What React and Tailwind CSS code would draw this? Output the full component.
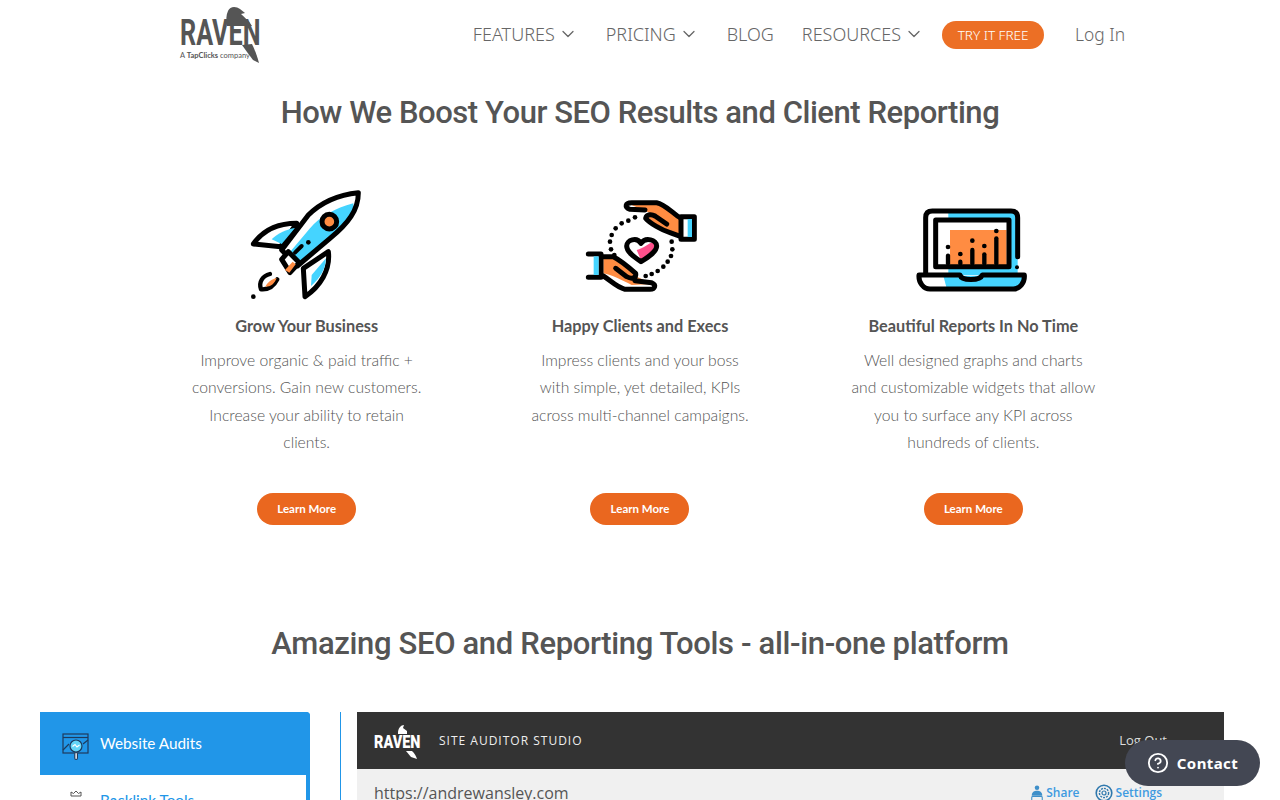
import { ChevronDown, CircleHelp } from 'lucide-react';

const sans = 'font-["Lato","Noto_Sans",sans-serif]';

function RavenLogo() {
  return (
    <div className="relative w-[120px] h-[75px] shrink-0">
      <svg viewBox="0 0 120 75" className="absolute inset-0 w-[120px] h-[75px]" fill="#555">
        <path d="M68 13 C70 8 76 8 80 11 L85 15 L81 16 C85 20 89 23 92 28 L67 28 C66 22 66 17 68 13 Z" />
        <path d="M82 47 L92 46 C95 52 97 58 99 65 L93 62 L87 54 Z" />
      </svg>
      <div className={`absolute left-[20px] top-[18px] origin-left scale-x-[0.7] text-[36px] leading-[34px] font-bold text-[#555] font-["Roboto",sans-serif]`}>RAVEN</div>
      <div className={`absolute left-[20px] top-[53px] text-[7.5px] leading-[10px] text-[#555] ${sans}`}>
        A <span className="font-bold">TapClicks</span> company
      </div>
    </div>
  );
}

function NavLink({ label, caret }) {
  return (
    <a className="flex items-center gap-[3px] text-[#666]">
      {label}
      {caret && <ChevronDown size={20} strokeWidth={1.5} />}
    </a>
  );
}

function RocketIcon() {
  return (
    <svg viewBox="0 0 390 375" className="w-[130px] h-[125px] mt-[6px] -ml-[3px]" strokeLinejoin="round" strokeLinecap="round">
      <path d="M40 192 C70 150 110 130 170 130 L122 200 Z" fill="#fff" stroke="#000" strokeWidth="15" />
      <path d="M95 178 C115 158 140 148 165 144 L125 192 Z" fill="#45d4ff" />
      <path d="M195 350 L190 265 L265 215 C272 270 240 320 195 350 Z" fill="#fff" stroke="#000" strokeWidth="15" />
      <path d="M215 285 L258 235 C256 270 240 295 213 318 Z" fill="#45d4ff" />
      <path d="M355 38 C290 45 240 70 205 105 L125 210 L172 258 L270 175 C325 130 355 90 355 38 Z" fill="#fff" />
      <path d="M340 70 C345 100 315 140 268 175 L172 252 L145 222 L210 145 C240 110 285 85 340 70 Z" fill="#45d4ff" />
      <path d="M355 38 C290 45 240 70 205 105 L125 210 L172 258 L270 175 C325 130 355 90 355 38 Z" fill="none" stroke="#000" strokeWidth="15" />
      <circle cx="268" cy="125" r="22" fill="#ff8c42" stroke="#000" strokeWidth="15" />
      <path d="M125 238 L145 215 L178 248 L150 278 Z" fill="#fff" stroke="#000" strokeWidth="15" />
      <path d="M135 270 L158 245 L167 253 L148 278 Z" fill="#ff8c42" />
      <path d="M90 282 C68 288 55 305 63 328 C85 330 102 318 112 298" fill="#fff" stroke="#000" strokeWidth="13" />
      <path d="M76 320 C83 305 95 298 110 293 C105 310 92 320 76 320 Z" fill="#ff8c42" />
      <circle cx="40" cy="350" r="7" fill="#000" />
      <circle cx="205" cy="187" r="7" fill="#000" />
      <path d="M165 218 L185 198" stroke="#000" strokeWidth="12" />
    </svg>
  );
}

function HandsIcon() {
  const dots = [[180, 82], [160, 92], [140, 100], [122, 115], [110, 135], [105, 155], [108, 178], [118, 195], [290, 155], [292, 178], [288, 198], [278, 215], [265, 230], [248, 243], [230, 252], [212, 258]];
  return (
    <svg viewBox="0 0 390 330" className="w-[130px] h-[110px] mt-[16px]" strokeLinejoin="round" strokeLinecap="round">
      <path d="M170 45 L245 40 C270 45 295 70 318 85 L318 140 L285 128 C260 115 235 100 215 82 C225 70 245 75 250 80 L205 60 Z" fill="#ff8c42" />
      <path d="M210 60 L165 58 C148 52 150 38 170 38 L245 38 C270 42 295 72 318 85 M318 140 L285 128 C260 120 225 100 212 85 C215 72 230 72 240 78 L275 102" fill="none" stroke="#000" strokeWidth="15" />
      <path d="M318 80 L358 80 L358 148 L318 148 Z" fill="#fff" stroke="#000" strokeWidth="15" />
      <path d="M338 87 L351 87 L351 141 L338 141 Z" fill="#45d4ff" />
      <path d="M85 205 L130 205 C150 215 170 240 180 258 L235 282 L170 285 C140 270 110 255 85 250 Z" fill="#ff8c42" />
      <path d="M180 272 L230 278 C245 285 240 298 225 298 L150 298 C125 292 105 270 85 258 M85 200 L115 200 C135 210 165 235 182 250 C185 265 170 268 155 260 L122 235" fill="none" stroke="#000" strokeWidth="15" />
      <path d="M40 192 L78 192 L78 262 L40 262" fill="#fff" stroke="#000" strokeWidth="15" />
      <path d="M56 199 L71 199 L71 255 L56 255 Z" fill="#45d4ff" />
      <path d="M198 215 C175 200 155 185 155 168 C155 150 185 140 198 160 C212 140 245 150 245 168 C245 185 222 200 198 215 Z" fill="#fff" />
      <path d="M198 210 L185 180 C205 175 220 160 235 155 C245 175 225 195 198 210 Z" fill="#ff4f8b" />
      <path d="M198 215 C175 200 155 185 155 168 C155 150 185 140 198 160 C212 140 245 150 245 168 C245 185 222 200 198 215 Z" fill="none" stroke="#000" strokeWidth="15" />
      {dots.map(([x, y]) => (
        <circle key={`${x}-${y}`} cx={x} cy={y} r="7" fill="#000" />
      ))}
    </svg>
  );
}

function LaptopIcon() {
  const bars = [[129, 182, 205], [166, 200, 205], [202, 165, 205], [238, 178, 205], [274, 130, 205]];
  const tops = [[129, 156], [166, 177], [202, 137], [238, 153], [274, 108]];
  return (
    <svg viewBox="0 0 390 315" className="w-[130px] h-[105px] mt-[21px] -ml-[6px]" strokeLinejoin="round" strokeLinecap="round">
      <path d="M130 48 L320 48 Q338 48 338 68 L338 240 L130 240 Z" fill="#45d4ff" />
      <path d="M115 242 L355 242 L345 280 L125 280 Z" fill="#45d4ff" />
      <path d="M62 238 L62 68 Q62 48 82 48 L318 48 Q338 48 338 68 L338 185" fill="none" stroke="#000" strokeWidth="15" />
      <rect x="92" y="75" width="220" height="140" fill="#fff" />
      <rect x="135" y="105" width="170" height="105" fill="#ff8c42" />
      <rect x="92" y="75" width="220" height="140" fill="none" stroke="#000" strokeWidth="15" />
      {bars.map(([x, y1, y2]) => (
        <path key={x} d={`M${x} ${y1} L${x} ${y2}`} stroke="#000" strokeWidth="13" />
      ))}
      {tops.map(([x, y]) => (
        <circle key={x} cx={x} cy={y} r="7" fill="#000" />
      ))}
      <circle cx="336" cy="217" r="6" fill="#000" />
      <path d="M42 240 L165 240 C170 258 225 258 232 240 L358 240 C360 262 345 282 325 282 L75 282 C55 282 40 262 42 240 Z" fill="none" stroke="#000" strokeWidth="15" />
    </svg>
  );
}

function FeatureCard({ icon, title, lines }) {
  return (
    <div className="flex flex-col items-center">
      <div className="h-[130px] flex items-start justify-center">{icon}</div>
      <h3 className="mt-[10px] text-[16.3px] leading-[24px] font-bold text-[#555]">{title}</h3>
      <div className="mt-[9px] h-[137px] text-[15.7px] leading-[27.3px] font-light text-[#555] text-center">
        {lines.map(l => (
          <p key={l}>{l}</p>
        ))}
      </div>
      <button className="mt-[9px] w-[99px] h-[32px] rounded-full bg-[#ea671f] text-white text-[11.5px] font-bold">Learn More</button>
    </div>
  );
}

const features = [
  {
    icon: <RocketIcon />,
    title: 'Grow Your Business',
    lines: ['Improve organic & paid traffic +', 'conversions. Gain new customers.', 'Increase your ability to retain', 'clients.'],
  },
  {
    icon: <HandsIcon />,
    title: 'Happy Clients and Execs',
    lines: ['Impress clients and your boss', 'with simple, yet detailed, KPIs', 'across multi-channel campaigns.'],
  },
  {
    icon: <LaptopIcon />,
    title: 'Beautiful Reports In No Time',
    lines: ['Well designed graphs and charts', 'and customizable widgets that allow', 'you to surface any KPI across', 'hundreds of clients.'],
  },
];

function AuditIcon() {
  return (
    <svg viewBox="0 0 28 28" className="w-[28px] h-[28px] mt-[7px]" fill="none" stroke="#1e3a5c" strokeWidth="1.2">
      <rect x="1" y="1" width="25" height="19" />
      <path d="M1 4.5 H26" />
      <path d="M1 17 L7 11 M21 11 L26 7" />
      <circle cx="14" cy="13" r="6" fill="#63d5f7" />
      <path d="M10.5 13.5 L13 11.5 L15 14 L17.5 12" stroke="#fff" />
      <rect x="12.8" y="19.5" width="2.6" height="7" rx="1.2" fill="#fff" />
    </svg>
  );
}

function BacklinkIcon() {
  return (
    <svg viewBox="0 0 12 20" className="w-[12px] h-[20px]" fill="#fff" stroke="#555" strokeWidth="1">
      <path d="M1 6 L1 2 L3.5 3.5 L6 1 L8.5 3.5 L11 2 L11 6 Z" />
    </svg>
  );
}

function SmallRaven() {
  return (
    <div className="relative w-[46px] h-[36px]">
      <div className={`absolute left-0 top-[9px] origin-left scale-x-[0.8] text-[18px] leading-[20px] font-black text-white font-["Roboto",sans-serif]`}>RAVEN</div>
      <svg viewBox="0 0 46 36" className="absolute inset-0 w-[46px] h-[36px]" fill="#fff">
        <path d="M24 10 C24 5 27 2 30 2 L29 5 L33 8 L33 11 L24 11 Z" />
        <path d="M32 28 L38 28 C41 31 42 33 43 36 L37 34 Z" />
      </svg>
    </div>
  );
}

function ShareIcon() {
  return (
    <svg viewBox="0 0 16 18" className="w-[14px] h-[16px]" fill="#3f8fc9">
      <circle cx="8" cy="3" r="2.6" />
      <path d="M2 12 C2 8 5 6.5 8 6.5 C11 6.5 14 8 14 12 Z" />
      <rect x="2" y="13" width="12" height="5" rx="1" fill="none" stroke="#3f8fc9" strokeWidth="1.2" />
    </svg>
  );
}

function SettingsIcon() {
  return (
    <svg viewBox="0 0 18 18" className="w-[18px] h-[18px]" fill="none" stroke="#2f78ad">
      <circle cx="9" cy="9" r="7.8" strokeWidth="1.6" />
      <circle cx="9" cy="9" r="4.6" strokeWidth="1.4" strokeDasharray="2 1" />
      <circle cx="9" cy="9" r="2" strokeWidth="1.2" />
    </svg>
  );
}

export default function App() {
  return (
    <div className={`relative h-[800px] w-[1280px] overflow-hidden bg-white ${sans}`}>
      <header className="h-[70px] pl-[160px] pr-[155px] flex items-center justify-between">
        <RavenLogo />
        <nav className={`-mt-[2px] flex items-center gap-[28px] text-[18px] font-["Noto_Sans",sans-serif] font-light`}>
          <NavLink label="FEATURES" caret />
          <NavLink label="PRICING" caret />
          <NavLink label="BLOG" />
          <NavLink label="RESOURCES" caret />
          <a className="-ml-[10px] mt-[2px] w-[102px] h-[28px] rounded-full bg-[#ec6f25] text-white text-[13.5px] flex items-center justify-center">TRY IT FREE</a>
          <a className="ml-[3px] text-[17.4px] text-[#666]">Log In</a>
        </nav>
      </header>

      <h1 className={`mt-[21px] text-center text-[31px] leading-[44px] font-medium tracking-[-0.45px] text-[#555] font-["Roboto",sans-serif]`}>How We Boost Your SEO Results and Client Reporting</h1>

      <section className="mt-[39px] mx-auto w-[1000px] grid grid-cols-3">
        {features.map(f => (
          <FeatureCard key={f.title} {...f} />
        ))}
      </section>

      <h2 className={`mt-[97px] text-center text-[31px] leading-[44px] font-medium tracking-[-0.35px] text-[#555] font-["Roboto",sans-serif]`}>Amazing SEO and Reporting Tools - all-in-one platform</h2>

      <section className="mt-[46px] pl-[40px] flex items-start">
        <aside className="w-[270px] h-[200px] border-r-[4px] border-[#2196e8] rounded-tr-[4px]">
          <div className="h-[63px] w-[270px] bg-[#2196e8] rounded-tr-[4px] flex items-center pl-[22px] gap-[10px] text-white text-[15.3px]">
            <AuditIcon />
            Website Audits
          </div>
          <div className="h-[50px] flex items-center pl-[30px] gap-[18px] text-[#2196e8] text-[15.3px]">
            <BacklinkIcon />
            Backlink Tools
          </div>
        </aside>
        <div className="ml-[30px] w-px h-[200px] bg-[#2196e8]" />
        <div className={`ml-[16px] w-[867px] font-["Open_Sans",sans-serif]`}>
          <div className="h-[57px] bg-[#333] flex items-center pl-[17px] pr-[57px] text-white">
            <SmallRaven />
            <span className="ml-[19px] text-[12px] tracking-[1px] text-[#eee]">SITE AUDITOR STUDIO</span>
            <span className="ml-auto text-[13px] text-[#ddd]">Log Out</span>
          </div>
          <div className="h-[60px] bg-[#f0f0f0] flex items-start pt-[13px] pl-[17px] pr-[62px]">
            <span className="text-[16px] leading-[22px] text-[#555]">https://andrewansley.com</span>
            <span className="ml-auto flex items-center gap-[15px] text-[12px] leading-[22px] font-semibold text-[#3f9be0]">
              <span className="flex items-center gap-[2px]"><ShareIcon />Share</span>
              <span className="flex items-center gap-[3px]"><SettingsIcon />Settings</span>
            </span>
          </div>
        </div>
      </section>

      <button className={`absolute left-[1125px] top-[740px] w-[135px] h-[46px] rounded-full bg-[#434753] text-white flex items-center justify-center gap-[8px] text-[15px] font-bold font-["Noto_Sans",sans-serif] tracking-[0.4px]`}>
        <CircleHelp size={22} strokeWidth={2} />
        Contact
      </button>
    </div>
  );
}
